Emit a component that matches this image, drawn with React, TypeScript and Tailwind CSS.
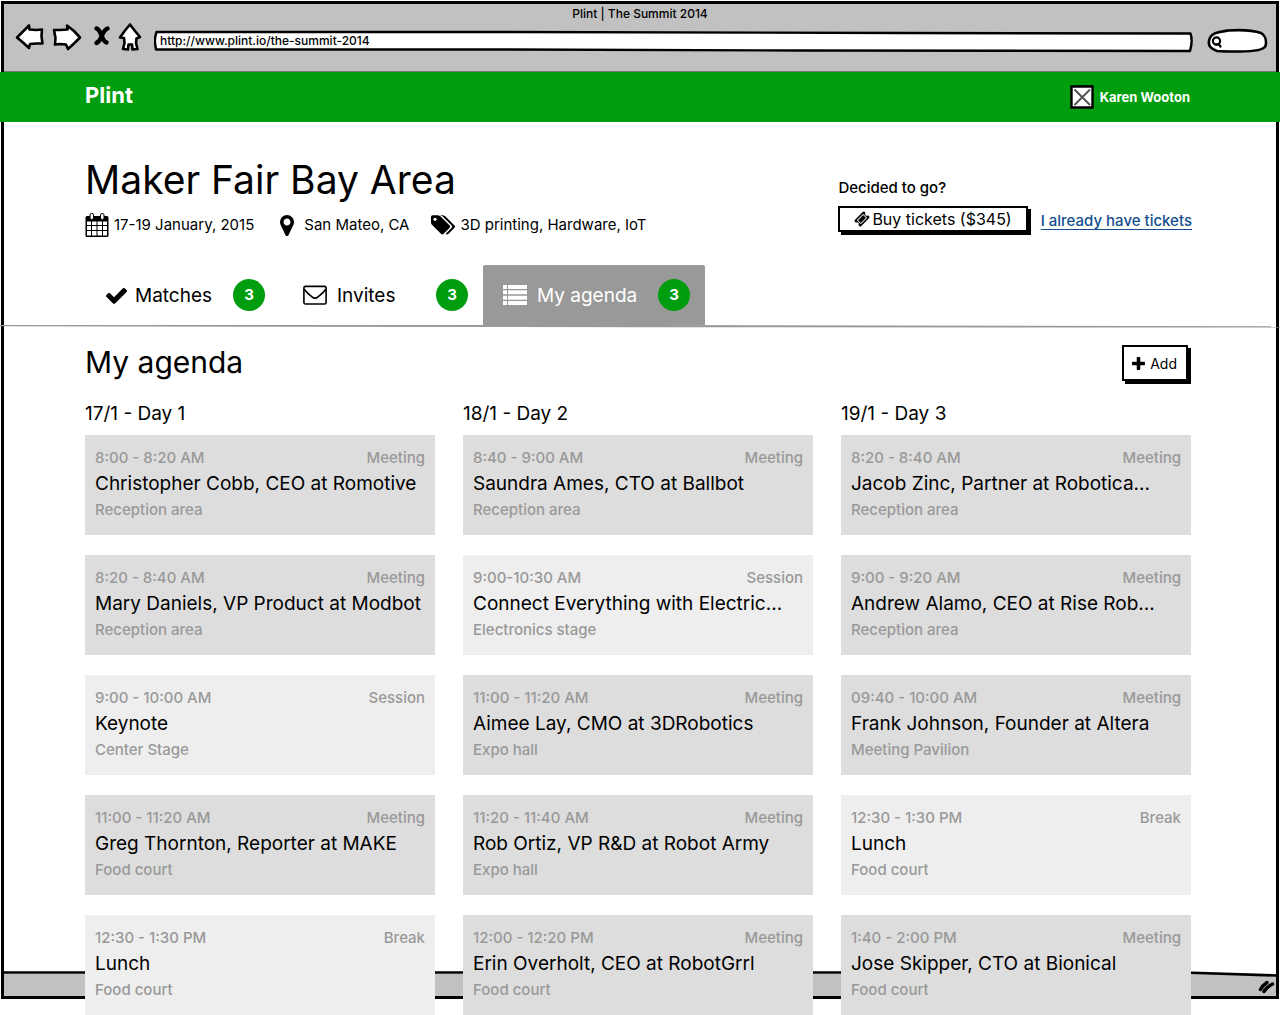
import type { ReactNode } from "react";

type Kind = "Meeting" | "Session" | "Break";
type Slot = { time: string; kind: Kind; title: string; place: string };
type Day = { label: string; slots: Slot[] };

const days: Day[] = [
  {
    label: "17/1 - Day 1",
    slots: [
      { time: "8:00 - 8:20 AM", kind: "Meeting", title: "Christopher Cobb, CEO at Romotive", place: "Reception area" },
      { time: "8:20 - 8:40 AM", kind: "Meeting", title: "Mary Daniels, VP Product at Modbot", place: "Reception area" },
      { time: "9:00 - 10:00 AM", kind: "Session", title: "Keynote", place: "Center Stage" },
      { time: "11:00 - 11:20 AM", kind: "Meeting", title: "Greg Thornton, Reporter at MAKE", place: "Food court" },
      { time: "12:30 - 1:30 PM", kind: "Break", title: "Lunch", place: "Food court" },
    ],
  },
  {
    label: "18/1 - Day 2",
    slots: [
      { time: "8:40 - 9:00 AM", kind: "Meeting", title: "Saundra Ames, CTO at Ballbot", place: "Reception area" },
      { time: "9:00-10:30 AM", kind: "Session", title: "Connect Everything with Electric...", place: "Electronics stage" },
      { time: "11:00 - 11:20 AM", kind: "Meeting", title: "Aimee Lay, CMO at 3DRobotics", place: "Expo hall" },
      { time: "11:20 - 11:40 AM", kind: "Meeting", title: "Rob Ortiz, VP R&D at Robot Army", place: "Expo hall" },
      { time: "12:00 - 12:20 PM", kind: "Meeting", title: "Erin Overholt, CEO at RobotGrrl", place: "Food court" },
    ],
  },
  {
    label: "19/1 - Day 3",
    slots: [
      { time: "8:20 - 8:40 AM", kind: "Meeting", title: "Jacob Zinc, Partner at Robotica...", place: "Reception area" },
      { time: "9:00 - 9:20 AM", kind: "Meeting", title: "Andrew Alamo, CEO at Rise Rob...", place: "Reception area" },
      { time: "09:40 - 10:00 AM", kind: "Meeting", title: "Frank Johnson, Founder at Altera", place: "Meeting Pavilion" },
      { time: "12:30 - 1:30 PM", kind: "Break", title: "Lunch", place: "Food court" },
      { time: "1:40 - 2:00 PM", kind: "Meeting", title: "Jose Skipper, CTO at Bionical", place: "Food court" },
    ],
  },
];

function Sketch({ box, className, children }: { box: string; className: string; children: ReactNode }) {
  return (
    <svg
      viewBox={box}
      className={className}
      fill="#fff"
      stroke="#000"
      strokeWidth="2.6"
      strokeLinejoin="round"
      strokeLinecap="round"
      aria-hidden="true"
    >
      {children}
    </svg>
  );
}

function Glyph({ box, className, d }: { box: string; className: string; d: string }) {
  return (
    <svg viewBox={box} className={className} fill="currentColor" aria-hidden="true">
      <path d={d} />
    </svg>
  );
}

const glyphs = {
  check:
    "M1671 566q0 40-28 68l-724 724-136 136q-28 28-68 28t-68-28l-136-136-362-362q-28-28-28-68t28-68l136-136q28-28 68-28t68 28l294 295 656-657q28-28 68-28t68 28l136 136q28 28 28 68z",
  plus:
    "M1600 736v192q0 40-28 68t-68 28h-416v416q0 40-28 68t-68 28h-192q-40 0-68-28t-28-68v-416h-416q-40 0-68-28t-28-68v-192q0-40 28-68t68-28h416v-416q0-40 28-68t68-28h192q40 0 68 28t28 68v416h416q40 0 68 28t28 68z",
  marker:
    "M1152 640q0-106-75-181t-181-75-181 75-75 181 75 181 181 75 181-75 75-181zm256 0q0 109-33 179l-364 774q-16 33-47.5 52t-67.5 19-67.5-19-46.5-52l-365-774q-33-70-33-179 0-212 150-362t362-150 362 150 150 362z",
  tags:
    "M448 448q0-53-37.5-90.5t-90.5-37.5-90.5 37.5-37.5 90.5 37.5 90.5 90.5 37.5 90.5-37.5 37.5-90.5zm1067 576q0 53-37 90l-491 492q-39 37-91 37-53 0-90-37l-715-716q-38-37-64.5-101t-26.5-117v-416q0-52 38-90t90-38h416q53 0 117 26.5t102 64.5l715 714q37 39 37 91zm384 0q0 53-37 90l-491 492q-39 37-91 37-36 0-59-14t-53-45l470-470q37-37 37-90 0-52-37-91l-715-714q-38-38-102-64.5t-117-26.5h224q53 0 117 26.5t102 64.5l715 714q37 39 37 91z",
  ticket:
    "M1024 452l316 316-572 572-316-316zm-211 979l618-618q19-19 19-45t-19-45l-362-362q-18-18-45-18t-45 18l-618 618q-19 19-19 45t19 45l362 362q18 18 45 18t45-18zm889-637l-907 908q-37 37-90.5 37t-90.5-37l-126-126q56-56 56-136t-56-136-136-56-136 56l-125-126q-37-37-37-90.5t37-90.5l907-906q37-37 90.5-37t90.5 37l125 125q-56 56-56 136t56 136 136 56 136-56l126 125q37 37 37 90.5t-37 90.5z",
};

function CalendarIcon() {
  return (
    <svg viewBox="0 0 24 24" className="h-6 w-6" aria-hidden="true">
      <path d="M2 3h20a1.500 1.500 0 0 1 1.500 1.500V22.500a1.500 1.500 0 0 1-1.500 1.500H2a1.500 1.500 0 0 1-1.500-1.500V4.500A1.500 1.500 0 0 1 2 3z" />
      <path
        fill="#fff"
        d="M2 8.500h4v3.500H2zM7 8.500h4.500v3.500H7zM12.500 8.500H17v3.500h-4.500zM18 8.500h4v3.500h-4zM2 13h4v4H2zM7 13h4.500v4H7zM12.500 13H17v4h-4.500zM18 13h4v4h-4zM2 18h4v4.500H2zM7 18h4.500v4.500H7zM12.500 18H17v4.500h-4.500zM18 18h4v4.500h-4z"
      />
      <rect x="5" y="0.500" width="3.500" height="6" rx="1.500" fill="#fff" stroke="#000" />
      <rect x="15.500" y="0.500" width="3.500" height="6" rx="1.500" fill="#fff" stroke="#000" />
    </svg>
  );
}

function EnvelopeIcon() {
  return (
    <svg viewBox="0 0 24 20" className="h-5 w-6" fill="none" stroke="currentColor" strokeWidth="1.6" strokeLinejoin="round" aria-hidden="true">
      <rect x="0.900" y="1.400" width="22.200" height="17.600" rx="1.600" />
      <path d="M1.200 4C3 7 6 9.500 9 11.800Q12 14.500 15 11.800C18 9.500 21 7 22.800 4" />
    </svg>
  );
}

function ListIcon() {
  return (
    <svg viewBox="0 0 24 20" className="h-5 w-6" fill="currentColor" aria-hidden="true">
      <path d="M0 0h4v4H0zM5 0h19v4H5zM0 5.300h4v4H0zM5 5.300h19v4H5zM0 10.700h4v4H0zM5 10.700h19v4H5zM0 16h4v4H0zM5 16h19v4H5z" />
    </svg>
  );
}

function BrowserBar() {
  return (
    <div className="relative mx-1 mt-1 h-[68px] border-b border-[#777] bg-[#c1c1c1] font-medium">
      <p className="text-center text-xs leading-[19px]">Plint | The Summit 2014</p>
      <div className="flex pr-2 pl-[11px]">
        <button type="button" aria-label="Back" className="mr-[7px]">
          <Sketch box="15 23 30 30" className="h-[30px] w-[30px]">
            <path d="M17 37.500L23 31.500 29 25.500 29.500 29.500 36 30 42 29.500 41.500 36 42.500 43.500 36 43.500 30 44 29 48 23 42.500z" />
          </Sketch>
        </button>
        <button type="button" aria-label="Forward" className="mr-[11px]">
          <Sketch box="52 23 30 30" className="h-[30px] w-[30px]">
            <path d="M54 30L60 30 67.500 29.500 67 25.500 74 31 80 37.500 74.500 43 68 49 66 44.500 60 44 55 44.500 55.500 38z" />
          </Sketch>
        </button>
        <button type="button" aria-label="Stop" className="mr-[7px]">
          <Sketch box="93 23 18 30" className="h-[30px] w-[18px]">
            <path fill="none" strokeWidth="4.400" d="M96.500 28.500Q99 29 101.500 35.500T106.500 42.500M107.500 28.500Q104 30 102 35.500T96.500 43" />
          </Sketch>
        </button>
        <button type="button" aria-label="Home" className="mr-3">
          <Sketch box="118 23 24 30" className="h-[30px] w-6">
            <path d="M130 24.500L135 31 140 37 136.500 38.500 136 43 137.500 49 132.500 49.500 132 44.500 128.500 44.500 128 49.500 123 49 124.500 43 124 38 120 37.500 125 30.500z" />
          </Sketch>
        </button>
        <div className="relative mr-[14px] h-[30px] min-w-0 flex-1">
          <svg viewBox="154 23 1039 30" preserveAspectRatio="none" className="absolute inset-0 h-full w-full" aria-hidden="true">
            <path
              d="M156.500 32Q154.500 38 155 43L156 49.500 500 49.500 800 50.500 1190 51Q1193 41 1190.500 33.500L900 33 500 32z"
              fill="#fff"
              stroke="#000"
              strokeWidth="2.400"
              strokeLinejoin="round"
            />
          </svg>
          <input
            type="text"
            aria-label="Address"
            defaultValue="http://www.plint.io/the-summit-2014"
            className="relative mt-[7px] block h-5 w-full bg-transparent px-1.5 text-xs outline-none"
          />
        </div>
        <div className="relative h-[30px] w-[61px]">
          <Sketch box="1207 23 61 30" className="absolute inset-0 h-full w-full">
            <path d="M1209 41C1210 33 1218 32 1228 30.500 1242 29.500 1255 31 1261 33 1266 36 1266.500 42 1265.500 46 1263 51 1250 51.500 1240 51.500 1230 51.500 1222 51.500 1217 51 1211 49 1208 46 1209 41z" />
            <circle cx="1216.500" cy="41" r="3.600" strokeWidth="2.200" />
            <path d="M1215 44.500L1219 44.500 1220.500 46.500" fill="none" strokeWidth="2.200" />
          </Sketch>
          <input type="search" aria-label="Search" className="relative mt-[7px] ml-4 block h-5 w-10 bg-transparent text-xs outline-none" />
        </div>
      </div>
    </div>
  );
}

function BrowserFrame() {
  return (
    <div className="absolute inset-x-px top-px bottom-4 flex flex-col justify-end border-[3px] border-black bg-white" aria-hidden="true">
      <div className="relative flex h-[22px] items-center justify-end bg-[#c1c1c1]">
        <svg viewBox="0 0 1272 6" preserveAspectRatio="none" className="absolute inset-x-0 -top-[3px] h-[6px] w-full">
          <path d="M0 0H1180L1272 3V0z" fill="#fff" />
          <path d="M0 1.500H1180L1272 4.500" fill="none" stroke="#000" strokeWidth="2.600" />
        </svg>
        <svg viewBox="0 0 18 14" className="mt-1 h-[14px] w-[18px]" fill="none" stroke="#000" strokeWidth="3.400" strokeLinecap="round">
          <path d="M2.500 9.500Q4.500 5.500 9 2.500M6 11.500Q8 7.500 14.500 4" />
        </svg>
      </div>
    </div>
  );
}

function Badge() {
  return (
    <span className="ml-auto flex h-8 w-8 items-center justify-center rounded-full bg-[#009e0f] text-[15px] font-bold text-white">
      3
    </span>
  );
}

function SlotCard({ slot }: { slot: Slot }) {
  return (
    <li className={`px-2.5 pt-2.5 pb-3 leading-[26px] ${slot.kind === "Meeting" ? "bg-[#dddddd]" : "bg-[#eeeeee]"}`}>
      <div className="flex justify-between text-[15px] font-medium text-[#999999]">
        <span>{slot.time}</span>
        <span>{slot.kind}</span>
      </div>
      <h4 className="truncate text-[19px] leading-[26px]">{slot.title}</h4>
      <p className="text-[15px] leading-[26px] font-medium text-[#999999]">{slot.place}</p>
    </li>
  );
}

export default function App() {
  return (
    <div className="relative flow-root bg-white font-[Inter,'Open_Sans',sans-serif] text-black">
      <BrowserFrame />
      <BrowserBar />

      <header className="relative flex h-[50px] items-center justify-between bg-[#009e0f] pr-[90px] pl-[85px] font-bold text-white">
        <a href="#" className="pb-1 text-[22px] leading-7">
          Plint
        </a>
        <a href="#" className="flex items-center gap-1.5 text-[13px] leading-5">
          <Sketch box="0 0 24 24" className="h-6 w-6">
            <path strokeWidth="2.400" strokeLinejoin="miter" d="M1.500 1.500L22.500 1.200 22.500 22.500 1.500 22.500z" />
            <path stroke="#555" strokeWidth="2" d="M5 5L19.500 19.500M19.500 5L5 19.500" />
          </Sketch>
          Karen Wooton
        </a>
      </header>

      <main className="relative">
        <section className="flex justify-between pt-[34px] pr-[88px] pl-[85px]">
          <div>
            <h1 className="text-[39px] leading-12">Maker Fair Bay Area</h1>
            <ul className="mt-2 flex items-center text-[15px] leading-[26px]">
              <li className="mr-[26px] flex items-center gap-[5px]">
                <CalendarIcon />
                17-19 January, 2015
              </li>
              <li className="mr-[22px] flex items-center gap-[10px]">
                <Glyph box="384 128 1024 1536" className="h-[21px] w-[14px]" d={glyphs.marker} />
                San Mateo, CA
              </li>
              <li className="flex items-center gap-[5px]">
                <Glyph box="0 128 1899 1536" className="h-5 w-6" d={glyphs.tags} />
                3D printing, Hardware, IoT
              </li>
            </ul>
          </div>
          <div className="pt-[19px]">
            <p className="text-[15px] leading-[26px] font-medium">Decided to go?</p>
            <div className="mt-[5px] flex items-center gap-[13px]">
              <button
                type="button"
                className="flex h-[26px] items-center gap-[2px] border-2 border-black bg-white px-[14px] text-[16px] shadow-[3px_3px_0_#000]"
              >
                <Glyph box="0 0 1792 1792" className="h-4 w-4" d={glyphs.ticket} />
                Buy tickets ($345)
              </button>
              <a href="#" className="mt-1 text-[15px] leading-5 font-medium text-[#134f8f] underline underline-offset-3">
                I already have tickets
              </a>
            </div>
          </div>
        </section>

        <nav className="mt-[27px] flex pl-[85px] text-[19px]">
          <button type="button" className="mr-[3px] flex h-[60px] w-[195px] items-center gap-2 pr-[15px] pl-[21px]">
            <Glyph box="121 270 1550 1252" className="h-[17px] w-[21px]" d={glyphs.check} />
            <span className="pt-0.5">Matches</span>
            <Badge />
          </button>
          <button type="button" className="flex h-[60px] w-[200px] items-center gap-[10px] pr-[15px] pl-5">
            <EnvelopeIcon />
            <span className="pt-0.5">Invites</span>
            <Badge />
          </button>
          <button type="button" className="flex h-[60px] w-[222px] items-center gap-[10px] rounded-t-xs bg-[#999999] pr-[15px] pl-5 text-white">
            <ListIcon />
            <span className="pt-0.5">My agenda</span>
            <Badge />
          </button>
        </nav>
        <svg viewBox="0 0 1280 3" preserveAspectRatio="none" className="block h-[3px] w-full" aria-hidden="true">
          <path d="M0 0L650 0 1280 1.200V2.600L650 2.200 0 1.300z" fill="#999999" />
        </svg>

        <section className="pr-[89px] pl-[85px]">
          <div className="flex items-start justify-between pt-4">
            <h2 className="text-[30px] leading-9">My agenda</h2>
            <button
              type="button"
              className="mt-px mr-[3px] flex h-9 items-center gap-[5px] border-2 border-black bg-white pr-[9px] pl-2 text-[14px] shadow-[3px_3px_0_#000]"
            >
              <Glyph box="192 128 1408 1408" className="h-[13px] w-[13px]" d={glyphs.plus} />
              Add
            </button>
          </div>
          <div className="mt-5 grid grid-cols-3 gap-7">
            {days.map((day) => (
              <section key={day.label} className="min-w-0">
                <h3 className="text-[19px] leading-[26px]">{day.label}</h3>
                <ul className="mt-2 flex flex-col gap-5">
                  {day.slots.map((slot) => (
                    <SlotCard key={slot.time} slot={slot} />
                  ))}
                </ul>
              </section>
            ))}
          </div>
        </section>
      </main>
    </div>
  );
}
